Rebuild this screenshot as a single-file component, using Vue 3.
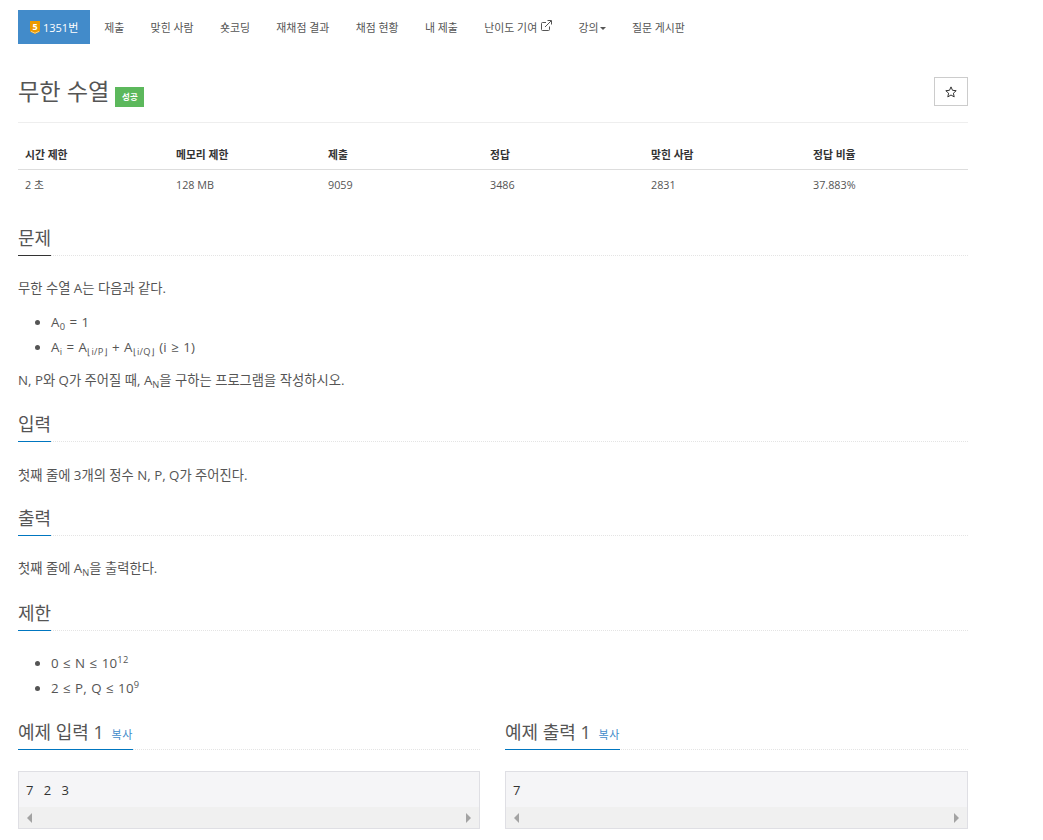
<script setup>
const navItems = ['제출', '맞힌 사람', '숏코딩', '재채점 결과', '채점 현황', '내 제출']
const headers = ['시간 제한', '메모리 제한', '제출', '정답', '맞힌 사람', '정답 비율']
const values = ['2 초', '128 MB', '9059', '3486', '2831', '37.883%']
const examples = [
  { title: '예제 입력 1', text: '7 2 3' },
  { title: '예제 출력 1', text: '7' },
]
</script>

<template>
  <div class="page">
    <nav class="nav">
      <a class="nav-item active">
        <svg class="tier" width="10" height="13" viewBox="0 0 10 13">
          <path d="M0 0H10V10.5L5 13L0 10.5Z" fill="#ec9a00" />
          <path d="M1 10.4L5 12.2L9 10.4" fill="none" stroke="#fbe3ae" stroke-width=".8" />
          <text x="5" y="8.6" text-anchor="middle" class="tier-num">5</text>
        </svg>
        <span>1351번</span>
      </a>
      <a v-for="n in navItems" :key="n" class="nav-item">{{ n }}</a>
      <a class="nav-item">난이도 기여
        <svg class="ext" width="11" height="11" viewBox="0 0 11 11" fill="none" stroke="#555" stroke-width="1">
          <path d="M8.5 6.5V9.5a1 1 0 0 1-1 1H1.5a1 1 0 0 1-1-1V3.5a1 1 0 0 1 1-1H5" />
          <path d="M4 7L10 1M6.5 .5H10.5V4.5" />
        </svg>
      </a>
      <a class="nav-item">강의<i class="caret"></i></a>
      <a class="nav-item">질문 게시판</a>
    </nav>

    <header class="title-row">
      <h1 class="title">무한 수열 <span class="badge">성공</span></h1>
      <button class="star" type="button">
        <svg width="12" height="12" viewBox="0 0 12 12">
          <path d="M6 .9L7.5 4.3L11.2 4.7L8.4 7.2L9.2 10.9L6 9L2.8 10.9L3.6 7.2L.8 4.7L4.5 4.3Z" fill="none" stroke="#333" stroke-width="1" />
        </svg>
      </button>
    </header>

    <table class="stats">
      <thead>
        <tr><th v-for="h in headers" :key="h">{{ h }}</th></tr>
      </thead>
      <tbody>
        <tr><td v-for="v in values" :key="v">{{ v }}</td></tr>
      </tbody>
    </table>

    <section class="sec first">
      <div class="head"><h2 class="dark">문제</h2></div>
      <p>무한 수열 A는 다음과 같다.</p>
      <ul class="math">
        <li>A<sub>0</sub> = 1</li>
        <li>A<sub>i</sub> = A<sub>⌊i/P⌋</sub> + A<sub>⌊i/Q⌋</sub> (i ≥ 1)</li>
      </ul>
      <p>N, P와 Q가 주어질 때, A<sub>N</sub>을 구하는 프로그램을 작성하시오.</p>
    </section>

    <section class="sec second">
      <div class="head"><h2>입력</h2></div>
      <p>첫째 줄에 3개의 정수 N, P, Q가 주어진다.</p>
    </section>

    <section class="sec third">
      <div class="head"><h2>출력</h2></div>
      <p>첫째 줄에 A<sub>N</sub>을 출력한다.</p>
    </section>

    <section class="sec fourth">
      <div class="head"><h2>제한</h2></div>
      <ul class="math limits">
        <li>0 ≤ N ≤ 10<sup>12</sup></li>
        <li>2 ≤ P, Q ≤ 10<sup>9</sup></li>
      </ul>
    </section>

    <div class="examples">
      <section v-for="e in examples" :key="e.title" class="example">
        <div class="head">
          <h2>{{ e.title }} <a class="copy">복사</a></h2>
        </div>
        <div class="sample">
          <pre>{{ e.text }}</pre>
          <div class="scrollbar">
            <i class="arrow left"></i>
            <i class="arrow right"></i>
          </div>
        </div>
      </section>
    </div>
  </div>
</template>

<style>
html, body { margin: 0; background: #fff; }
</style>

<style scoped>
.page {
  box-sizing: border-box;
  width: 950px;
  height: 840px;
  overflow: hidden;
  margin-left: 18px;
  padding-top: 10px;
  color: #555;
  font-family: "Open Sans", "Noto Sans CJK KR", sans-serif;
  font-size: 13.3px;
  line-height: 25px;
}
.nav { display: flex; height: 34px; }
.nav-item {
  display: flex;
  align-items: center;
  gap: 3px;
  padding: 0 13.2px;
  font-size: 10.9px;
  white-space: nowrap;
  color: #555;
}
.nav-item.active {
  width: 72px;
  box-sizing: border-box;
  margin-right: 1px;
  padding: 0 0 0 12px;
  background: #428bca;
  color: #fff;
  font-size: 11px;
}
.tier { flex: none; }
.tier-num { font-size: 9px; font-weight: 700; fill: #fff; }
.ext { margin-left: 1px; margin-top: -3px; }
.caret {
  width: 0; height: 0;
  margin-left: -2px;
  margin-top: 2px;
  border-top: 3.5px solid #555;
  border-left: 3.5px solid transparent;
  border-right: 3.5px solid transparent;
}
.title-row {
  display: flex;
  justify-content: space-between;
  align-items: flex-start;
  height: 46px;
  margin-top: 33px;
  border-bottom: 1px solid #eee;
  box-sizing: border-box;
}
.title {
  margin: 0;
  font-size: 23.2px;
  line-height: 28px;
  font-weight: 400;
  color: #555;
  white-space: nowrap;
}
.badge {
  display: inline-block;
  vertical-align: 0;
  width: 29px;
  height: 20px;
  margin-left: 0;
  background: #5cb85c;
  color: #fff;
  font-size: 8.5px;
  font-weight: 700;
  line-height: 20px;
  text-align: center;
}
.star {
  display: flex;
  align-items: center;
  justify-content: center;
  width: 34px;
  height: 29px;
  padding: 0;
  background: #fff;
  border: 1px solid #ccc;
}
.stats {
  width: 950px;
  margin-top: 17px;
  border-collapse: collapse;
  table-layout: fixed;
  font-size: 10.8px;
}
.stats th, .stats td { box-sizing: border-box; }
.stats th:nth-child(1) { width: 151px; }
.stats th:nth-child(2) { width: 152px; }
.stats th:nth-child(3), .stats th:nth-child(5) { width: 162px; }
.stats th:nth-child(4) { width: 161px; }
.stats th:nth-child(6) { width: 162px; }
.stats th {
  height: 29px;
  padding: 0 7px;
  text-align: left;
  font-weight: 700;
  color: #333;
  border-bottom: 1px solid #ddd;
}
.stats td {
  height: 30px;
  padding: 0 7px;
}
.sec.first { margin-top: 26px; }
.sec.second { margin-top: 18px; }
.sec.third { margin-top: 16.5px; }
.sec.fourth { margin-top: 19.5px; }
.head {
  height: 31px;
  box-sizing: border-box;
  border-bottom: 1px dotted #e4e4e4;
}
h2 {
  display: inline-block;
  height: 31px;
  box-sizing: border-box;
  margin: 0;
  font-size: 18px;
  line-height: 26px;
  font-weight: 400;
  color: #555;
  border-bottom: 1px solid #0076c0;
  white-space: nowrap;
}
h2.dark { border-bottom-color: #333; }
p { margin: 20px 0 0; height: 25px; }
.second p { margin-top: 21px; }
ul { margin: 9px 0 0; padding: 0 0 0 33px; }
.math { word-spacing: .5px; letter-spacing: .25px; }
.limits { margin-top: 20px; }
li { height: 25px; }
ul + p { margin-top: 8px; }
sub, sup { font-size: 70%; line-height: 0; }
sub { vertical-align: -3px; }
sup { vertical-align: 5px; }
.copy { font-size: 11px; letter-spacing: .5px; color: #428bca; margin-left: 3px; }
.examples {
  display: grid;
  grid-template-columns: 462px 463px;
  gap: 25px;
  margin-top: 18px;
}
.sample {
  margin-top: 21px;
  height: 58px;
  box-sizing: border-box;
  border: 1px solid #dfdfe4;
  background: #f5f5f7;
}
pre {
  margin: 0;
  height: 35px;
  padding: 6px 7px 0;
  box-sizing: border-box;
  font-family: "Open Sans", sans-serif;
  font-size: 13px;
  line-height: 25px;
  word-spacing: 7px;
  color: #333;
}
.scrollbar {
  display: flex;
  justify-content: space-between;
  align-items: center;
  height: 21px;
  padding: 0 8px;
  background: #f0f0f0;
}
.arrow {
  width: 0; height: 0;
  border-top: 5px solid transparent;
  border-bottom: 5px solid transparent;
}
.left { border-right: 5px solid #a3a3a3; }
.right { border-left: 5px solid #a3a3a3; }
</style>
